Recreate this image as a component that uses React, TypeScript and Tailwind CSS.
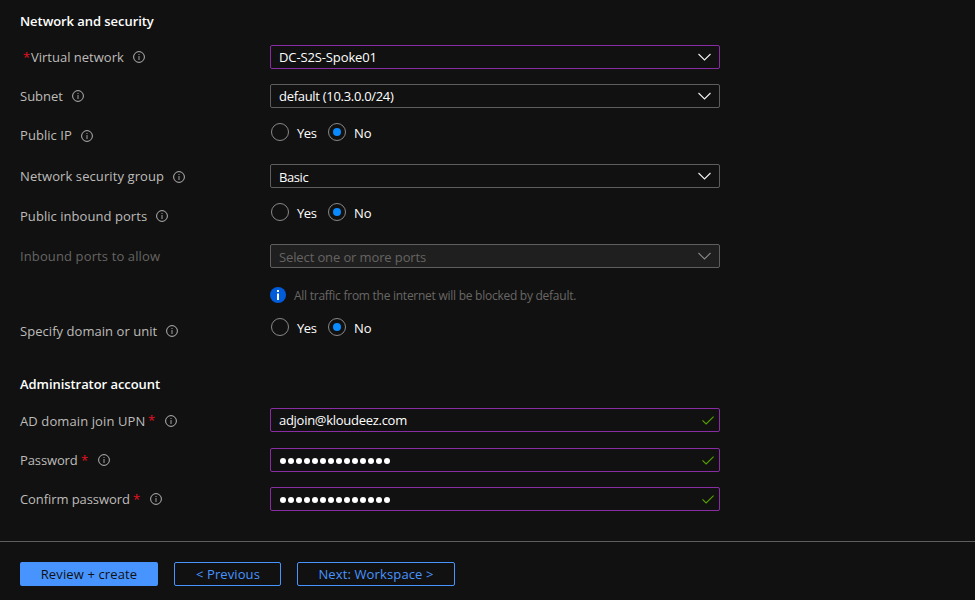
import type { ReactNode } from 'react';
import { clsx } from 'clsx';

function InfoOutline() {
  return (
    <svg width="12" height="12" viewBox="0 0 12 12" className="shrink-0" fill="none">
      <circle cx="6" cy="6" r="5.4" stroke="#b5b3b1" strokeWidth="1" />
      <path d="M6 5v4" stroke="#a3a19f" strokeWidth="1" />
      <path d="M6 3v1" stroke="#a3a19f" strokeWidth="1" />
    </svg>
  );
}

function Chevron({ dim }: { dim?: boolean }) {
  return (
    <svg width="14" height="8" viewBox="0 0 14 8" fill="none" className="shrink-0">
      <path d="M.5 1l6 6 6-6" stroke={dim ? '#8a8886' : '#f3f2f1'} strokeWidth="1.1" />
    </svg>
  );
}

function Check() {
  return (
    <svg width="12" height="9" viewBox="0 0 12 9" fill="none" className="shrink-0">
      <path d="M.5 4.3l3.6 3.6L11.6.6" stroke="#57a300" strokeWidth="1.1" />
    </svg>
  );
}

function Label({ text, width, before, after, info = true, dim, low }: {
  text: string; width: string; before?: boolean; after?: boolean; info?: boolean; dim?: boolean; low?: boolean;
}) {
  return (
    <div className={clsx('flex h-6 w-[250px] shrink-0 items-center', dim ? 'text-[#666462]' : 'text-[#bebcba]')}>
      {before && <span className="ml-[3px] w-2 font-medium text-[#e81123]">*</span>}
      <span className={clsx('whitespace-nowrap', width)}>{text}</span>
      {after && <span className="ml-[3px] w-2 font-medium text-[#e81123]">*</span>}
      {info && <span className={clsx('ml-[9px]', low && 'pt-0.5')}><InfoOutline /></span>}
    </div>
  );
}

function Row({ className, label, children }: { className: string; label: ReactNode; children: ReactNode }) {
  return <div className={clsx('flex h-6 items-start', className)}>{label}{children}</div>;
}

function Field({ tone, children, icon }: { tone: string; children: ReactNode; icon: ReactNode }) {
  return (
    <div className={clsx('flex h-6 w-[450px] items-center justify-between rounded-[2px] border pl-2', tone)}>
      {children}
      {icon}
    </div>
  );
}

function Radio({ on }: { on?: boolean }) {
  return (
    <span className="flex size-[18px] items-center justify-center rounded-full border border-[#8a8886]">
      {on && <span className="size-2 rounded-full bg-[#0a8bff]" />}
    </span>
  );
}

function YesNo() {
  return (
    <div className="-mt-px ml-px flex h-[18px] items-center text-white">
      <Radio />
      <span className="ml-2 w-[31px] pt-0.5 tracking-[-0.4px]">Yes</span>
      <Radio on />
      <span className="ml-2 pt-0.5">No</span>
    </div>
  );
}

const purple = 'border-[#8a2da5] text-white';
const gray = 'border-[#605e5c] text-white';
const down = <span className="pr-[7px]"><Chevron /></span>;
const tick = <span className="pr-[5px]"><Check /></span>;

function Dots() {
  return (
    <span className="flex gap-0.5 pl-px pt-0.5">
      {Array.from({ length: 14 }, (_, i) => <span key={i} className="size-1.5 rounded-full bg-white" />)}
    </span>
  );
}

export default function App() {
  return (
    <div className="h-[600px] w-[975px] overflow-hidden bg-[#111111] font-['Open_Sans','Noto_Sans',sans-serif] text-[13px] leading-[18px]">
      <main className="flex h-[541px] flex-col pl-5">
        <h2 className="mt-3 h-[18px] font-semibold tracking-[-0.06px] text-white">Network and security</h2>
        <Row className="mt-[15px]" label={<Label before text="Virtual network" width="w-[93px]" />}>
          <Field tone={purple} icon={down}><span className="tracking-[-0.12px]">DC-S2S-Spoke01</span></Field>
        </Row>
        <Row className="mt-[15px]" label={<Label text="Subnet" width="w-[43px]" />}>
          <Field tone={gray} icon={down}><span className="tracking-[-0.3px]">default (10.3.0.0/24)</span></Field>
        </Row>
        <Row className="mt-4" label={<Label text="Public IP" width="w-[52px] tracking-[0.06px] pb-0.5" />}><YesNo /></Row>
        <Row className="mt-4" label={<Label low text="Network security group" width="w-[144px] tracking-[0.09px]" />}>
          <Field tone={gray} icon={down}><span className="pt-0.5 tracking-[-0.4px]">Basic</span></Field>
        </Row>
        <Row className="mt-4" label={<Label text="Public inbound ports" width="w-[127px] tracking-[0.05px]" />}><YesNo /></Row>
        <Row className="mt-4" label={<Label dim info={false} text="Inbound ports to allow" width="w-[140px] tracking-[0.12px]" />}>
          <Field tone="border-[#605e5c] bg-[#1f1f1f] text-[#666462]" icon={<span className="pr-[7px]"><Chevron dim /></span>}>
            <span className="pt-0.5 tracking-[-0.12px]">Select one or more ports</span>
          </Field>
        </Row>
        <div className="ml-[250px] mt-[19px] flex h-4 items-center text-[12px] text-[#696765]">
          <svg width="16" height="16" viewBox="0 0 16 16">
            <circle cx="8" cy="8" r="8" fill="#015cda" />
            <path d="M7 6.5h2V13H7zM7 3h2v2H7z" fill="#fff" />
          </svg>
          <span className="ml-2 pt-0.5 tracking-[-0.26px]">All traffic from the internet will be blocked by default.</span>
        </div>
        <Row className="mt-4" label={<Label text="Specify domain or unit" width="w-[137px] tracking-[0.05px]" />}><YesNo /></Row>
        <h2 className="mt-8 h-[18px] font-semibold tracking-[-0.06px] text-white">Administrator account</h2>
        <Row className="mt-[15px]" label={<Label low after text="AD domain join UPN" width="w-[125px] tracking-[0.1px] pt-0.5" />}>
          <Field tone={purple} icon={tick}><span className="tracking-[-0.28px]">adjoin@kloudeez.com</span></Field>
        </Row>
        <Row className="mt-4" label={<Label after text="Password" width="w-[58px] tracking-[-0.12px]" />}>
          <Field tone={purple} icon={tick}><Dots /></Field>
        </Row>
        <Row className="mt-[15px]" label={<Label after text="Confirm password" width="w-[110px] tracking-[-0.08px]" />}>
          <Field tone={purple} icon={tick}><Dots /></Field>
        </Row>
      </main>
      <footer className="flex h-[59px] gap-4 border-t border-[#605e5c] pl-5 pt-5 text-[#4894fe]">
        <button className="flex h-6 w-[138px] items-center justify-center rounded-[2px] bg-[#4894fe] tracking-[0.13px] text-[#111111]">Review + create</button>
        <button className="flex h-6 w-[107px] items-center justify-center rounded-[2px] border border-[#4894fe] pl-px tracking-[0.08px]">&lt; Previous</button>
        <button className="flex h-6 w-[158px] items-center justify-center rounded-[2px] border border-[#4894fe] tracking-[0.13px]">Next: Workspace &gt;</button>
      </footer>
    </div>
  );
}
